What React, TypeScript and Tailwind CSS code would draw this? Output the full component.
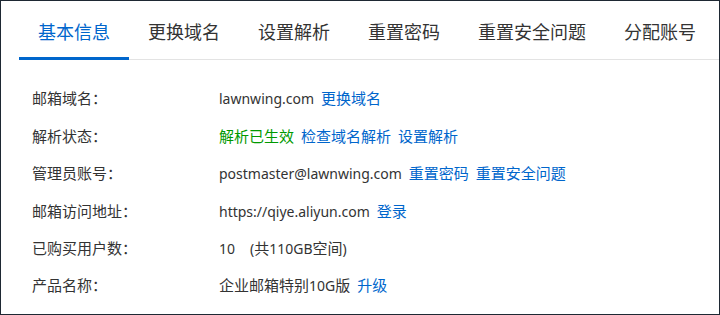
import React from "react";

const font = { fontFamily: '"Noto Sans", "Noto Sans CJK SC", sans-serif' };

const tabs = ["基本信息", "更换域名", "设置解析", "重置密码", "重置安全问题", "分配账号"];

type Part = { t: string; c?: "link" | "green"; gap?: string };

const rows: { label: string; parts: Part[] }[] = [
  { label: "邮箱域名：", parts: [{ t: "lawnwing.com" }, { t: "更换域名", c: "link" }] },
  {
    label: "解析状态：",
    parts: [
      { t: "解析已生效", c: "green" },
      { t: "检查域名解析", c: "link" },
      { t: "设置解析", c: "link" },
    ],
  },
  {
    label: "管理员账号：",
    parts: [
      { t: "postmaster@lawnwing.com" },
      { t: "重置密码", c: "link" },
      { t: "重置安全问题", c: "link" },
    ],
  },
  { label: "邮箱访问地址：", parts: [{ t: "https://qiye.aliyun.com" }, { t: "登录", c: "link" }] },
  { label: "已购买用户数：", parts: [{ t: "10" }, { t: "(共110GB空间)", gap: "wide" }] },
  { label: "产品名称：", parts: [{ t: "企业邮箱特别10G版" }, { t: "升级", c: "link" }] },
];

function Mixed({ text }: { text: string }) {
  const runs = text.match(/[\u3000-\u9fff\uff00-\uffef]+|[^\u3000-\u9fff\uff00-\uffef]+/g) || [];
  return (
    <>
      {runs.map((r, i) =>
        /[\u3000-\u9fff\uff00-\uffef]/.test(r) ? (
          <span key={i}>{r}</span>
        ) : (
          <span key={i} className="text-[14px]">
            {r}
          </span>
        )
      )}
    </>
  );
}

export default function App() {
  return (
    <div
      className="w-[720px] h-[315px] border border-[#1e2833] bg-white text-[#333333] overflow-hidden"
      style={font}
    >
      <div className="ml-[18px] h-[59px] flex items-stretch border-b border-[#e3e3e3]">
        {tabs.map((t, i) =>
          i === 0 ? (
            <div
              key={t}
              className="shrink-0 whitespace-nowrap px-[19px] pt-[6px] flex items-center text-[18px] text-[#0066cc] border-b-[3px] border-[#0066cc] -mb-px"
            >
              {t}
            </div>
          ) : (
            <div
              key={t}
              className="shrink-0 whitespace-nowrap px-[19px] pt-[4px] flex items-center text-[18px] text-[#333333]"
            >
              {t}
            </div>
          )
        )}
      </div>
      <div className="pl-[31px] pt-[20px]">
        {rows.map((r) => (
          <div key={r.label} className="flex items-center h-[37.4px] text-[15px] whitespace-nowrap">
            <div className="w-[187px] shrink-0">{r.label}</div>
            <div className="flex items-baseline">
              {r.parts.map((p, j) => (
                <span
                  key={j}
                  className={
                    (j === 0 ? "" : p.gap === "wide" ? "ml-[15px] " : "ml-[7px] ") +
                    (p.c === "link"
                      ? "text-[#0066cc]"
                      : p.c === "green"
                      ? "text-[#009900]"
                      : "text-[#333333]")
                  }
                >
                  <Mixed text={p.t} />
                </span>
              ))}
            </div>
          </div>
        ))}
      </div>
    </div>
  );
}
